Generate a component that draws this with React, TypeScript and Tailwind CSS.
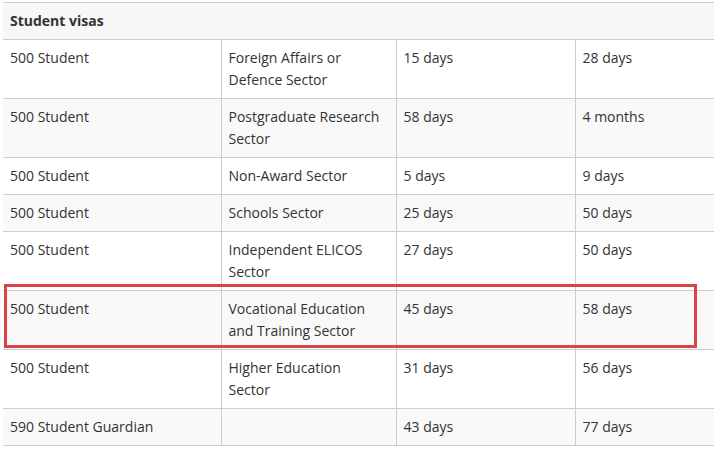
import React from "react";

const rows: [string, string, string, string][] = [
  ["500 Student", "Foreign Affairs or Defence Sector", "15 days", "28 days"],
  ["500 Student", "Postgraduate Research Sector", "58 days", "4 months"],
  ["500 Student", "Non-Award Sector", "5 days", "9 days"],
  ["500 Student", "Schools Sector", "25 days", "50 days"],
  ["500 Student", "Independent ELICOS Sector", "27 days", "50 days"],
  ["500 Student", "Vocational Education and Training Sector", "45 days", "58 days"],
  ["500 Student", "Higher Education Sector", "31 days", "56 days"],
  ["590 Student Guardian", "", "43 days", "77 days"],
];

export default function App() {
  return (
    <div
      className="relative w-[714px] h-[452px] bg-white overflow-hidden pt-[2px] pl-[3px] text-[#333] text-[14px] leading-[22px]"
      style={{ fontFamily: '"Open Sans", "Noto Sans", sans-serif' }}
    >
      <table className="table-fixed border-collapse w-[712px]">
        <colgroup>
          <col className="w-[218px]" />
          <col className="w-[175px]" />
          <col className="w-[179px]" />
          <col />
        </colgroup>
        <thead>
          <tr className="bg-[#f7f7f7]">
            <th
              colSpan={4}
              className="text-left font-bold border-y border-[#cccccc] px-[7px] py-[7px]"
            >
              Student visas
            </th>
          </tr>
        </thead>
        <tbody>
          {rows.map((r, i) => (
            <tr key={i} className={i % 2 === 1 ? "bg-[#f9f9f9]" : "bg-white"}>
              {r.map((c, j) => (
                <td
                  key={j}
                  className={
                    "align-top border-b border-[#cccccc] px-[7px] py-[7px] font-normal " +
                    (j > 0 ? "border-l" : "")
                  }
                >
                  {j === 1 ? <div className="w-[153px]">{c}</div> : c}
                </td>
              ))}
            </tr>
          ))}
        </tbody>
      </table>
      <div className="absolute left-[4px] top-[284px] w-[693px] h-[64px] border-[3px] border-[#d9444b] pointer-events-none" />
    </div>
  );
}
